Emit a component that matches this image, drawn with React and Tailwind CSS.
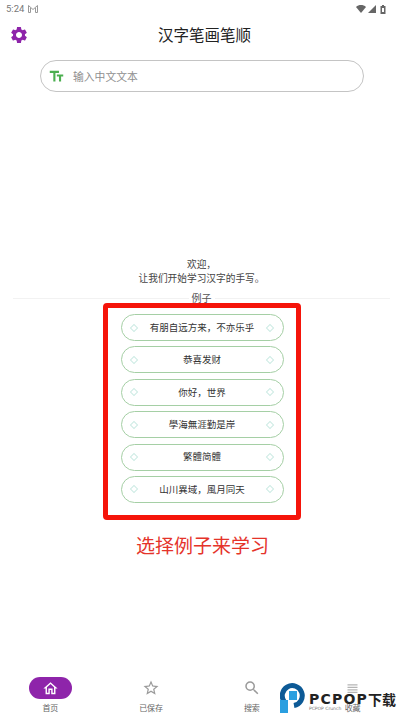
import { MdSettings, MdOutlineHome, MdStarBorder, MdSearch, MdViewHeadline, MdTextFields } from 'react-icons/md';

const font = { fontFamily: '"Noto Sans CJK SC", "Noto Sans", sans-serif' };

const examples = ['有朋自远方来，不亦乐乎', '恭喜发财', '你好，世界', '學海無涯勤是岸', '繁體简體', '山川異域，風月同天'];

const Diamond = () => (
  <span className="block h-[6px] w-[6px] rotate-45 border border-[#cdebe4]" />
);

const ExampleRow = ({ text }) => (
  <div className="flex h-[27px] w-[163px] items-center justify-between rounded-[14px] border border-[#a5cfa5] px-[9px]">
    <Diamond />
    <span className="text-[9.5px] leading-none text-[#333]">{text}</span>
    <Diamond />
  </div>
);

const NavItem = ({ icon: Icon, label, size = 18, color = 'text-[#9a9a9a]' }) => (
  <div className="flex w-[101px] flex-col items-center">
    <div className="flex h-[22px] items-center justify-center">
      <Icon size={size} className={color} />
    </div>
    <span className="mt-[3px] text-[8px] leading-[12px] text-[#666]">{label}</span>
  </div>
);

const App = () => {
  return (
    <div className="relative flex h-[720px] w-[403px] flex-col overflow-hidden bg-white" style={font}>
      <div className="flex h-[17px] items-center justify-between pl-[6px] pr-[17px] pt-[1px]">
        <div className="flex items-center gap-[4px] text-[9.5px] text-[#777]" style={{ fontFamily: 'Roboto, sans-serif' }}>
          <span>5:24</span>
          <svg width="10" height="8" viewBox="0 0 10 8" fill="none" stroke="#999" strokeWidth="1">
            <path d="M.5 7.500v-7l4.500 4 4.500-4v7M.5 7.500h2V3M9.500 7.500h-2V3" />
          </svg>
        </div>
        <div className="flex items-center">
          <svg width="10" height="8" viewBox="0 0 10 8" fill="#666"><path d="M0 2C2.800-.6 7.200-.6 10 2L5 8z" /></svg>
          <svg className="ml-[2px]" width="8" height="8" viewBox="0 0 8 8" fill="#666"><path d="M8 0v8H0z" /></svg>
          <svg className="ml-[4px]" width="6" height="9" viewBox="0 0 6 9" fill="#666"><path d="M2 0h2v1h1.500v8H.5V1H2zM2 3v4h2V3z" /></svg>
        </div>
      </div>

      <div className="flex h-[35px] items-center pl-[9px]">
        <MdSettings size={20} className="text-[#8e24aa]" />
        <h1 className="ml-[129px] text-[15.5px] font-normal leading-none text-[#222]">汉字笔画笔顺</h1>
      </div>

      <div className="ml-[40px] mt-[8px] flex h-[32px] w-[324px] items-center rounded-[16px] border border-[#c4c4c4] pl-[7px]">
        <MdTextFields size={17} className="text-[#4caf50]" />
        <span className="ml-[8px] text-[10.8px] text-[#8f8f8f]">输入中文文本</span>
      </div>

      <div className="mt-[165px] flex flex-col items-center text-[9.7px] leading-[14px] text-[#444]">
        <span>欢迎，</span>
        <span>让我们开始学习汉字的手写。</span>
      </div>

      <div className="mt-[6px] flex flex-col items-center">
        <div className="ml-[13px] flex w-[377px] items-center gap-[3px] self-start">
          <div className="h-px flex-1 bg-[#f2f2f2]" />
          <span className="text-[10px] leading-[14px] text-[#555]">例子</span>
          <div className="h-px flex-1 bg-[#f2f2f2]" />
        </div>
        <div className="ml-[1px] mt-[-2px] flex h-[217px] w-[198px] flex-col items-center gap-[5.400px] rounded-[4px] border-[5px] border-[#f5140a] pt-[6px]">
          {examples.map(text => (
            <ExampleRow key={text} text={text} />
          ))}
        </div>
        <span className="ml-[2px] mt-[11px] text-[19px] leading-[28px] text-[#e5332a]">选择例子来学习</span>
      </div>

      <div className="mt-auto flex pb-[6px]">
        <div className="flex w-[101px] flex-col items-center">
          <div className="flex h-[22px] w-[43px] items-center justify-center rounded-[11px] bg-[#8e24aa]">
            <MdOutlineHome size={17} className="text-white" />
          </div>
          <span className="mt-[3px] text-[8px] leading-[12px] text-[#666]">首页</span>
        </div>
        <NavItem icon={MdStarBorder} label="已保存" />
        <NavItem icon={MdSearch} label="搜索" />
        <NavItem icon={MdViewHeadline} label="收藏" size={15} color="text-[#b5b5b5]" />
      </div>

      {/* watermark sits over the nav */}
      <div className="absolute left-[280px] top-[683px] flex items-start">
        <svg width="26" height="30" viewBox="0 0 26 30">
          <path d="M4.500 19A10 10 0 1 1 14 22.500" fill="none" stroke="#0d5a96" strokeWidth="5" />
          <rect x="0" y="17" width="8" height="13" fill="#2a9fe0" />
          <rect x="9" y="8" width="8" height="9" fill="#2a9fe0" />
        </svg>
        <div className="ml-[3px] mt-[9px] flex flex-col">
          <div className="flex items-center leading-[14px]">
            <span className="text-[14px] font-bold tracking-[1.200px] text-[#222]" style={{ fontFamily: '"DejaVu Sans", sans-serif' }}>PCPOP</span>
            <span className="text-[14px] font-bold text-[#222]">下载</span>
          </div>
          <span className="text-[4.500px] leading-[6px] text-[#777]" style={{ fontFamily: '"DejaVu Sans", sans-serif' }}>PCPOP Crunch</span>
        </div>
      </div>
    </div>
  );
};

export default App;
